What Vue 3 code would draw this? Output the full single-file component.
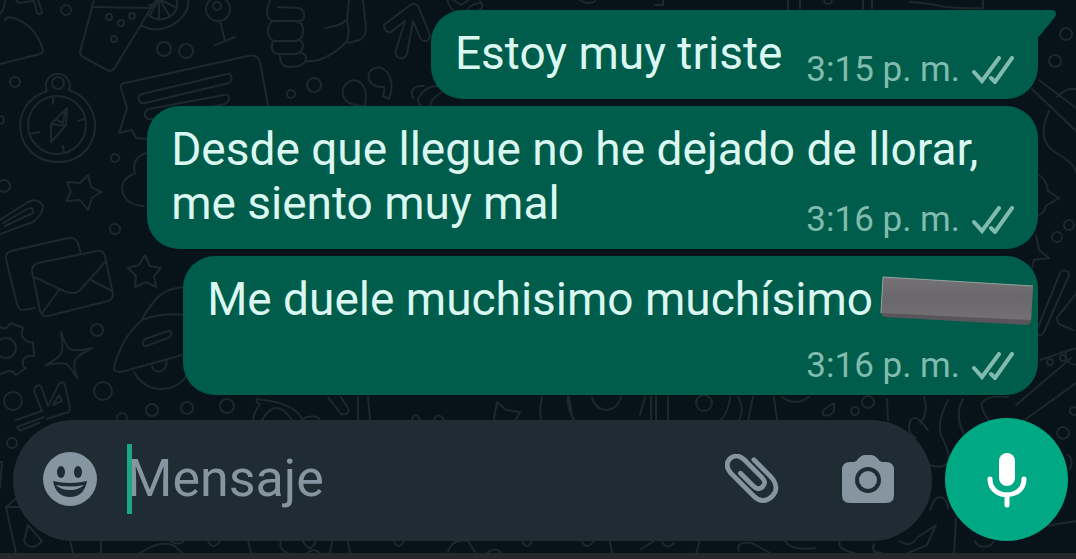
<script setup>
import { ref } from 'vue'

const draft = ref('')
const messages = [
  { id: 1, text: 'Estoy muy triste', time: '3:15 p. m.', tail: true },
  { id: 2, text: 'Desde que llegue no he dejado de llorar, me siento muy mal', time: '3:16 p. m.' },
  { id: 3, text: 'Me duele muchisimo muchísimo', time: '3:16 p. m.', hidden: true },
]
</script>

<template>
  <div class="screen">
    <svg class="wallpaper" viewBox="0 0 1076 559" preserveAspectRatio="xMinYMin slice" aria-hidden="true">
      <!-- fan, drink and citrus -->
      <path d="M16 0l2 3 16-2 3 12q4 3 5-1L38 0M5 20q2-4 8-2 22 6 30 32 0 3-3 4L0 64M0 14q5-6 5-14" />
      <path d="M94 0L80 52q0 3 3 5l24 13q4 2 7-1L156 0M94 7l57 1M142 26q18 9 36-5Q190 11 188 0M147 14q10 9 22 3 10-5 8-17M158 0l-8 15M159 0v18M160 0l9 15M161 0l14 7M149 5l7 0" />
      <circle cx="66" cy="10" r="5" /><circle cx="109" cy="17" r="3" /><circle cx="121" cy="23" r="3" /><circle cx="132" cy="16" r="3" /><circle cx="114" cy="39" r="3" />
      <circle cx="164" cy="49" r="7" /><circle cx="186" cy="51" r="7" /><circle cx="15" cy="82" r="5" /><circle cx="0" cy="120" r="4" /><circle cx="115" cy="158" r="4" /><circle cx="4" cy="186" r="6" />
      <!-- compass -->
      <circle cx="57" cy="125" r="29" /><path d="M47 91a12 12 0 1 1 22-1c40 14 32 72-11 72S5 105 47 91" /><circle cx="58" cy="83" r="6" />
      <path d="M53 97v7M84 119l-6 2M64 153l-1-7M30 134l9-2M51 142V124l16-16-1 17-15 17zM51 124l15 2M57 120l6 3 2-11" />
      <!-- megaphone card -->
      <path d="M119 133l8-25-6-20q-1-4 4-5l123-27q9-2 12 6l8 43M119 133l13-3 4 8 12 1M227 74L142 94q-5 2-3 6 1 4 6 3l84-20q4-3 2-7-1-3-4-2zM224 95L149 109q-5 2-4 7 2 4 7 3l73-15q4-2 4-6 0-4-5-3z" />
      <!-- joystick and fist -->
      <circle cx="218" cy="9" r="12" /><circle cx="217" cy="6" r="4" /><path d="M220 21l5 20M215 45l20-8M278 7l21 1q6 3 5 9-1 4-6 4h-26q-6-3-5-11l3-10M273 21q-6 4-5 13 2 6 6 7h22q7-2 7-9 1-8-6-11M273 41q-4 12 6 13h17q7-2 7-9 0-3-4-5M280 54q-1 12 8 13 18 0 18-9 0-4-5-5M306 61q20 2 41-20 3-10 0-20 1-10 2-21M325 28q16-2 21-8M363 0l3 28q0 8-6 12l-12 3" />
      <path d="M385 24l24-18q5-4 9 0l12 29q0 6-5 6-4 0-6-6l-6-14-6 33q-3 6-8 4-5-3-3-8l9-29-14 11q-4 1-6-3-2-3 0-5z" />
      <circle cx="291" cy="94" r="4" /><circle cx="314" cy="85" r="7" />
      <path d="M358 105q-11 0-15-9-2-8 4-13 8-6 15 1 6 8 3 22l-6 0zM384 87q-11 1-15-7-2-8 4-11 7-4 14 3 8 11 2 27l-6-3q2-5 1-9zM413 98q-4-10 6-12h5M421 105q-6-3 0-11 9-11 23-7M430 107q0-8 12-15" />
      <path d="M447 0q4 12 12 13M453 0l8 5 8-5M480 3q-13 2-12 8 20 1 12-10M580 0q8 6 15 1M655 5h8V0M788 0v9M800 0v9M863 0v9M872 0v9M910 2q20 1 35 5 20 2 38 1V0" />
      <circle cx="828" cy="0" r="4" /><circle cx="1066" cy="34" r="6" /><circle cx="1055" cy="61" r="6" />
      <!-- cloud and pen -->
      <path d="M147 153q-16 4-12 20-18 8-11 23 6 10 20 10M0 220l28-18q10-5 15 4 0 8-10 16L0 234M3 223l26-15q5 0 4 5L5 226" />
      <path d="M88 175l3 12 10 5-9 6-4 12-8-10-14 1 5-9-4-10 13 1zM145 255l5 11 11 2-7 8 2 11-10-5-11 5 1-11-8-8 11-3z" />
      <circle cx="115" cy="229" r="5" /><circle cx="97" cy="330" r="6" />
      <!-- envelopes -->
      <path d="M35 308l-12 2q-4 0-6-6L6 259q-1-6 5-8l57-13q7-1 10 5l3 11M38 263l59-12q6-1 8 5l8 38q0 5-5 7l-60 15q-6 1-8-5l-8-40q0-6 6-8zM34 277l30 14q11 5 17-2l25-28M42 313l17-23M91 280l21 11" />
      <!-- gear, sparkle and rocket -->
      <circle cx="6" cy="348" r="10" /><path d="M0 327q6 3 7 0l4-4 12 5q-3 7 1 11 4 4 9 3l1 14q-9-1-11 5-1 6 3 7l-10 7q-5-6-10-3-3 1-5 2M61 332q4 13 9 17 6 3 22-1-16 8-17 13-2 5 2 17-6-11-11-14-5-2-20 1 14-7 16-14 1-7-1-19z" />
      <path d="M186 287q-18 0-29 11-12 14-15 22-20 17-28 47-1 5 7 5l65-18M142 320q19-8 44-5M145 339l23-8q4 0 3 3 0 3-3 4l-22 8q-4 0-3-4zM134 372q10 17 27 17 17 0 26-14M152 366q2 7 9 5 7-3 5-11" />
      <circle cx="103" cy="391" r="9" /><circle cx="13" cy="401" r="9" /><circle cx="152" cy="410" r="6" /><circle cx="187" cy="408" r="6" /><circle cx="227" cy="406" r="7" /><circle cx="122" cy="418" r="5" /><circle cx="12" cy="443" r="5" />
      <path d="M16 420l26-9-8-20q2-8 7-5l7 20 11-22q4-4 6 1l5 23q0 5-5 5l-18 6M53 405l6-10 3 6-9 4M17 427l27-10M17 427q2 5 7 2l15-6M0 462h2l-2 26" />
      <!-- band between messages and composer -->
      <path d="M253 420q1-8 7-16-5-2-3-5 38 4 45 20 13-6 18 1M262 420q14-24 30 0M328 397l13 17q6 2 8-4l-8-13M358 397v24M368 397l2 24M412 420q0-5 5-5l3 5M434 420q4-9 10 0M494 419l3-17 9 8 14 2-6 10M542 397q-3 12-1 24M569 397l4 24M568 397q-1 14 7 24M592 397q2 11 13 13 12 0 16-13M645 397l-5 18M651 397v23M656 397v23M668 397v23M730 397q-1 14-9 23M738 397q7 12 1 23M753 397l-5 23M774 397l3 23M782 397q13 10 27 0M826 408l8-5v8q-4 6-10 4-4-2 2-7zM887 399l1 21M924 397q5 15-4 27" />
      <circle cx="704" cy="403" r="8" /><circle cx="855" cy="411" r="4" /><circle cx="868" cy="402" r="6" />
      <!-- right edge doodles -->
      <path d="M1032 89l44 42M1039 80l37 28M1057 97q10-10 19-8M1049 111q-14 31 9 43 16 9 18 18M1039 175q8 5 9 16l11 7-13 8q-2 7-7 9M1036 235l3 15 10 8-15 2-3 11M1060 273q3-5 8-1 2 3-1 8l-24 54q-5 3-7-2l24-59M1076 294l-17 21q-4 4 0 9l14 6M1040 360l36-12M1066 352q-2 11 10 13M1016 405l55-47M1008 397q-22-2-26 6-2 7 9 20M1026 419l50-36" />
      <circle cx="1057" cy="237" r="5" /><circle cx="1069" cy="225" r="5" /><circle cx="1050" cy="362" r="3" /><circle cx="1063" cy="358" r="3" /><circle cx="1074" cy="411" r="4" /><circle cx="1063" cy="433" r="6" />
      <path d="M928 430q-16-22-19-4-1 7 7 12M926 464q21 7 23-5 0-8-8-24-4-14 7-35M963 399q-9 16 1 35M1068 455q6 5 2 14M930 510q5-16 13-12 5 4 5 11M1076 521l-30 5" />
      <path d="M6 507l18-15M6 507l10 46M6 507h22M28 525l-4 16q7 12 18 0zM70 541l3 12M101 553v-12M140 553q20-14 35-7l7 7M170 541q10 5 14 0M208 541q5 10 12 0M248 541l3 12M281 541q-3 8 7 12M303 541q7 14 13 0M308 553q4-6 12 0M332 541l-2 12M348 541l2 12M394 541q4 10 10 0M448 552q4-14 20-11l7 11M487 553q9-7 14 0M522 541q5 10 10 0M582 541q4 10 12 0M610 541l2 12M641 549l13-8M662 541q4 10 12 2M700 541l-4 12M739 551q-4-10 13-8l18 10M785 541q6 10 30 7M840 541q-4 8 14 12M874 544q-4 9 8 9M900 541q10 8 18-4l18-12-9 20-19 8M956 519l-2 34M975 541q4 9 16 4l3-4" />
    </svg>

    <main class="chat">
      <article v-for="m in messages" :key="m.id" class="bubble" :class="{ stacked: m.hidden }">
        <svg v-if="m.tail" class="tail" viewBox="0 0 20 30" aria-hidden="true">
          <path d="M0 0H14Q21 0 18 7L0 29Z" />
        </svg>
        <span class="text">{{ m.text }}<svg v-if="m.hidden" class="cover" viewBox="0 0 154 50" aria-hidden="true">
          <defs>
            <linearGradient id="slab" x1="0" y1="0" x2="0" y2="1">
              <stop offset="0" stop-color="#747275" />
              <stop offset="0.5" stop-color="#696769" />
              <stop offset="1" stop-color="#747174" />
            </linearGradient>
          </defs>
          <path d="M3 1L153 10 151 46 148 49 4 41 1 38Z" fill="#59555a" />
          <path d="M3 1L153 10 151 44 1 37Z" fill="url(#slab)" />
          <path d="M3 1L153 10M3 1L1 37" fill="none" stroke="#91a39d" />
        </svg></span>
        <span class="meta">
          <time>{{ m.time }}</time>
          <svg class="ticks" viewBox="0 0 42 28" role="img" aria-label="Entregado">
            <path d="M2 16L10 25 27 2M19 22L23 26 40 2" />
          </svg>
        </span>
      </article>
    </main>

    <form class="composer" @submit.prevent>
      <div class="field">
        <button type="button" class="icon" aria-label="Emojis">
          <svg class="emoji" viewBox="0 0 54 54">
            <circle cx="27" cy="27" r="27" fill="#8696a0" />
            <ellipse cx="18" cy="20" rx="4" ry="6" fill="#1f2c34" />
            <ellipse cx="35" cy="20" rx="4" ry="6" fill="#1f2c34" />
            <path d="M10 29Q27 33 44 29Q41 45 27 45T10 29Z" fill="#1f2c34" />
            <path d="M13 33Q27 36 41 33Q36 38 27 38T13 33Z" fill="#8696a0" />
          </svg>
        </button>
        <div class="entry">
          <input v-model="draft" type="text" placeholder="Mensaje" aria-label="Mensaje" />
          <span class="caret"></span>
        </div>
        <button type="button" class="icon" aria-label="Adjuntar">
          <svg class="clip" viewBox="0 0 56 52">
            <path d="M30 6L46 22C54 30 55 38 49 44C43 50 36 50 30 44L6 20C1 14 1 9 5 5C9 1 15 1 20 6L38 24C42 28 42 31 39 34C36 37 33 37 29 33L16 20" />
          </svg>
        </button>
        <button type="button" class="icon" aria-label="Cámara">
          <svg class="camera" viewBox="0 0 52 50">
            <path d="M8 8H12Q14 8 16 5L18 3Q20 1 23 1H29Q32 1 34 3L36 5Q38 8 40 8H44Q52 8 52 16V41Q52 49 44 49H8Q0 49 0 41V16Q0 8 8 8Z" fill="#8696a0" />
            <circle cx="26" cy="26" r="11" fill="#8696a0" stroke="#1f2c34" stroke-width="4" />
          </svg>
        </button>
      </div>
      <button type="button" class="mic" aria-label="Grabar mensaje de voz">
        <svg viewBox="0 0 40 56">
          <rect x="12" y="1" width="16" height="33" rx="8" fill="#fff" />
          <path d="M3 27C3 48 37 48 37 27M20 43V53" fill="none" stroke="#fff" stroke-width="5" stroke-linecap="round" />
        </svg>
      </button>
    </form>
    <div class="edge"></div>
  </div>
</template>

<style>
body {
  margin: 0;
  background: #071319;
}
</style>

<style scoped>
.screen {
  position: relative;
  display: flex;
  flex-direction: column;
  min-height: 100vh;
  overflow: hidden;
  background: #071319;
  font-family: Roboto, "Liberation Sans", sans-serif;
}
.wallpaper {
  position: absolute;
  inset: 0;
  width: 100%;
  height: 100%;
  fill: none;
  stroke: #1b282c;
  stroke-width: 2;
  stroke-linejoin: round;
  stroke-linecap: round;
}
.chat {
  position: relative;
  flex: 1;
  display: flex;
  flex-direction: column;
  align-items: flex-end;
  gap: 7px;
  padding: 10px 38px 22px 14px;
}
.bubble {
  position: relative;
  display: flow-root;
  box-sizing: border-box;
  max-width: 87%;
  padding: 16px 24px 9px 24px;
  border-radius: 32px;
  background: #005d4b;
  color: #dbf7f1;
  font-size: 46px;
  line-height: 54px;
}
.bubble:first-child {
  border-top-right-radius: 0;
}
.tail {
  position: absolute;
  top: 0;
  left: 100%;
  width: 20px;
  height: 30px;
  margin-left: -1px;
  fill: #005d4b;
}
.meta {
  float: right;
  display: flex;
  align-items: center;
  gap: 12px;
  margin: 24px 0 0 24px;
  color: #80bbae;
  font-size: 35px;
  line-height: 40px;
  white-space: nowrap;
}
.stacked .text {
  display: block;
}
.stacked .meta {
  float: none;
  width: fit-content;
  margin: 20px 0 0 auto;
}
.cover {
  width: 154px;
  height: 50px;
  margin: 4px -20px 0 7px;
  vertical-align: top;
}
.ticks {
  width: 42px;
  height: 28px;
  fill: none;
  stroke: #80bbae;
  stroke-width: 4;
  stroke-linecap: round;
}
.composer {
  position: relative;
  display: flex;
  align-items: flex-end;
  gap: 13px;
  padding: 0 8px 12px 13px;
}
.field {
  flex: 1;
  min-width: 0;
  box-sizing: border-box;
  display: flex;
  align-items: center;
  height: 121px;
  padding: 0 38px 4px 30px;
  border-radius: 61px;
  background: #1f2c34;
}
button {
  display: grid;
  place-items: center;
  padding: 0;
  border: 0;
  background: none;
  cursor: pointer;
}
.emoji {
  width: 54px;
  height: 54px;
}
.entry {
  position: relative;
  flex: 1;
  min-width: 0;
  margin: 0 24px 0 30px;
}
.entry input {
  display: block;
  width: 100%;
  box-sizing: border-box;
  height: 70px;
  padding: 0;
  border: 0;
  outline: 0;
  background: none;
  color: #e9edef;
  caret-color: #1ba784;
  font: 52px Roboto, "Liberation Sans", sans-serif;
}
.entry input::placeholder {
  color: #8696a0;
  opacity: 1;
}
.caret {
  position: absolute;
  top: 0;
  left: 0;
  width: 5px;
  height: 70px;
  background: #1ba784;
}
.clip {
  width: 54px;
  height: 50px;
  margin-right: 63px;
  fill: none;
  stroke: #8696a0;
  stroke-width: 5;
  stroke-linecap: round;
}
.camera {
  width: 52px;
  height: 50px;
}
.mic {
  flex: none;
  width: 123px;
  height: 123px;
  border-radius: 50%;
  background: #00a884;
}
.mic svg {
  width: 40px;
  height: 56px;
}
.edge {
  position: relative;
  height: 6px;
  background: #262829;
}
</style>
